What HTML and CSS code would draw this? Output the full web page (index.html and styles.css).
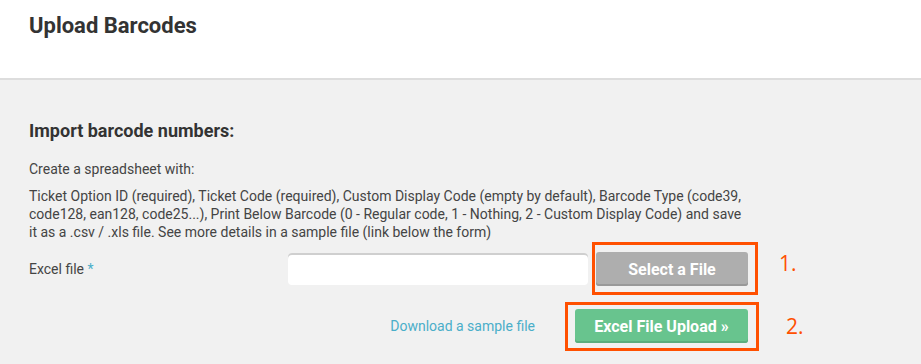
FILE: index.html
```html
<!DOCTYPE html>
<html lang="en">
<head>
    <meta charset="UTF-8">
    <meta name="viewport" content="width=device-width, initial-scale=1.0">
    <title>Upload Barcodes</title>
    <link rel="stylesheet" href="styles.css">
</head>
<body>
    <header class="page-header">
        <h1>Upload Barcodes</h1>
    </header>
    <main class="content">
        <h2>Import barcode numbers:</h2>
        <p>Create a spreadsheet with:</p>
        <p class="desc">Ticket Option ID (required), Ticket Code (required), Custom Display Code (empty by default), Barcode Type (code39, code128, ean128, code25...), Print Below Barcode (0 - Regular code, 1 - Nothing, 2 - Custom Display Code) and save it as a .csv / .xls file. See more details in a sample file (link below the form)</p>
        <form class="upload-form">
            <div class="row">
                <label class="label">Excel file <span class="req">*</span></label>
                <div class="field">
                    <input type="text" class="file-name">
                    <div class="marked mark-1">
                        <button type="button" class="btn btn-grey">Select a File</button>
                        <span class="step">1.</span>
                    </div>
                </div>
            </div>
            <div class="row actions">
                <a href="#" class="sample">Download a sample file</a>
                <div class="marked mark-2">
                    <button type="submit" class="btn btn-green">Excel File Upload &raquo;</button>
                    <span class="step">2.</span>
                </div>
            </div>
        </form>
    </main>
</body>
</html>
```

FILE: styles.css
```css
body {
    margin: 0;
    font-family: Roboto, 'Liberation Sans', sans-serif;
    background: #f1f1f1;
    color: #444;
}

.page-header {
    background: #fff;
    height: 78px;
    border-bottom: 2px solid #dddddd;
    padding: 0 29px;
}

.page-header h1 {
    margin: 0;
    padding-top: 13px;
    font-size: 22px;
    font-weight: bold;
    color: #333;
}

.content {
    padding: 40px 29px 20px;
}

.content h2 {
    margin: 0 0 19px;
    font-size: 18px;
    font-weight: bold;
    color: #333;
}

.content p {
    margin: 0 0 9px;
    font-size: 14px;
    line-height: 18px;
}

.content p.desc {
    width: 722px;
}

.upload-form {
    margin-top: 11px;
}

.row {
    display: flex;
    align-items: center;
    width: 719px;
}

.label {
    width: 259px;
    font-size: 14px;
}

.req {
    color: #4aaec9;
}

.field {
    display: flex;
    align-items: center;
    gap: 8px;
}

.file-name {
    width: 300px;
    height: 32px;
    box-sizing: border-box;
    border: none;
    border-radius: 4px;
    background: #fff;
    box-shadow: inset 0 2px 0 #cfcfcf;
}

.marked {
    position: relative;
}

.marked::after {
    content: '';
    position: absolute;
    border: 3px solid #ff5000;
}

.mark-1::after {
    left: -4px;
    right: -10px;
    top: -10px;
    bottom: -9px;
}

.mark-2::after {
    left: -10px;
    right: -11px;
    top: -7px;
    bottom: -8px;
}

.step {
    position: absolute;
    font-family: 'Open Sans', sans-serif;
    font-size: 21px;
    color: #ff5000;
}

.mark-1 .step {
    left: 183px;
    top: -3px;
}

.mark-2 .step {
    left: 211px;
    top: 3px;
}

.btn {
    display: block;
    height: 34px;
    border: none;
    border-radius: 3px;
    color: #fff;
    font-family: Roboto, 'Liberation Sans', sans-serif;
    font-size: 16px;
    font-weight: bold;
    cursor: pointer;
}

.btn-grey {
    width: 152px;
    background: #aeaeae;
    box-shadow: inset 0 -2px 0 #999;
}

.btn-green {
    width: 173px;
    background: #68c48e;
    box-shadow: inset 0 -2px 0 #5aae7e;
}

.actions {
    justify-content: flex-end;
    margin-top: 23px;
    gap: 40px;
}

.sample {
    color: #4aaec9;
    font-size: 14px;
    text-decoration: none;
}
```
